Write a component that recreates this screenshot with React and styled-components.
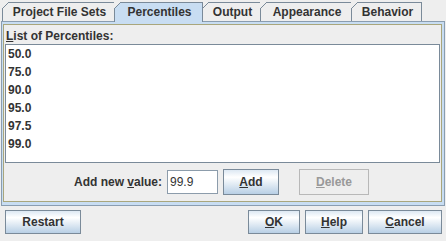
import React from "react";
import styled, { createGlobalStyle, css } from "styled-components";

const Global = createGlobalStyle`
  html, body { margin: 0; padding: 0; background: #eeeeee; }
`;

const BORDER = "#7a8a99";
const SEL = "#c8ddf2";
const BG = "#eeeeee";

const Root = styled.div`
  width: 446px;
  height: 241px;
  box-sizing: border-box;
  background: ${BG};
  display: flex;
  flex-direction: column;
  font-family: "Liberation Sans", Arial, sans-serif;
  font-size: 12px;
  font-weight: bold;
  color: #333333;
`;

const TabBar = styled.div`
  display: flex;
  align-items: flex-end;
  height: 21px;
  box-sizing: border-box;
  padding: 2px 0 0 2px;
  position: relative;
  z-index: 1;
`;

const Tab = styled.div`
  position: relative;
  box-sizing: border-box;
  width: ${(p) => p.$w}px;
  height: 19px;
  margin-left: ${(p) => (p.$first ? 0 : -1)}px;
  border: 1px solid ${BORDER};
  border-bottom: none;
  background: ${BG};
  display: flex;
  align-items: center;
  justify-content: center;
  padding-left: 2px;
  white-space: nowrap;
  ${(p) =>
    p.$selected &&
    css`
      background: ${SEL};
      height: 20px;
      margin-bottom: -1px;
      padding-bottom: 1px;
      z-index: 2;
    `}
  &::before {
    content: "";
    position: absolute;
    top: -1px;
    left: -1px;
    width: 7px;
    height: 7px;
    background: linear-gradient(
      135deg,
      ${BG} 0,
      ${BG} calc(50% - 0.6px),
      ${BORDER} calc(50% - 0.6px),
      ${BORDER} calc(50% + 0.6px),
      transparent calc(50% + 0.6px)
    );
  }
`;

const Panel = styled.div`
  margin: 0 1px;
  height: 185px;
  box-sizing: border-box;
  border: 1px solid #8a9db0;
  background: ${SEL};
  padding: 2px 2px 3px 1px;
  display: flex;
`;

const Content = styled.div`
  flex: 1;
  border: 1px solid #a9a67c;
  background: ${BG};
  padding: 3px 1px 0 1px;
  display: flex;
  flex-direction: column;
`;

const Caption = styled.div`
  height: 16px;
  line-height: 16px;
  padding-left: 1px;
`;

const List = styled.div`
  height: 119px;
  box-sizing: border-box;
  border: 1px solid ${BORDER};
  background: #ffffff;
  display: flex;
  flex-direction: column;
`;

const Item = styled.div`
  height: 18px;
  line-height: 18px;
  padding-left: 2px;
`;

const AddRow = styled.div`
  margin-top: 6px;
  height: 26px;
  display: flex;
  align-items: center;
  justify-content: center;
  padding-right: 2px;
`;

const FieldLabel = styled.span`
  margin-right: 5px;
`;

const Field = styled.div`
  width: 51px;
  height: 24px;
  box-sizing: border-box;
  border: 1px solid #8c9cab;
  background: #ffffff;
  font-weight: normal;
  display: flex;
  align-items: center;
  padding-left: 2px;
  margin-right: 5px;
`;

const Button = styled.div`
  box-sizing: border-box;
  width: ${(p) => p.$w}px;
  height: ${(p) => p.$h || 24}px;
  margin-left: ${(p) => p.$ml || 0}px;
  border: 1px solid ${BORDER};
  background: linear-gradient(#dde8f3 0%, #ffffff 30%, #b8cfe5 100%);
  display: flex;
  align-items: center;
  justify-content: center;
  ${(p) =>
    p.$disabled &&
    css`
      border-color: #b8b8b8;
      background: ${BG};
      color: #999999;
    `}
`;

const Mn = styled.span`
  text-decoration: underline;
  text-underline-offset: 1px;
`;

const ButtonBar = styled.div`
  display: flex;
  justify-content: space-between;
  padding: 4px 4px 0 5px;
`;

const Group = styled.div`
  display: flex;
`;

const tabs = [
  ["Project File Sets", 113],
  ["Percentiles", 89],
  ["Output", 59],
  ["Appearance", 92],
  ["Behavior", 71],
];

const values = ["50.0", "75.0", "90.0", "95.0", "97.5", "99.0"];

export default function App() {
  return (
    <Root>
      <Global />
      <TabBar>
        {tabs.map(([t, w], i) => (
          <Tab key={t} $w={w} $first={i === 0} $selected={i === 1}>
            {t}
          </Tab>
        ))}
      </TabBar>
      <Panel>
        <Content>
          <Caption>
            <Mn>L</Mn>ist of Percentiles:
          </Caption>
          <List>
            {values.map((v) => (
              <Item key={v}>{v}</Item>
            ))}
          </List>
          <AddRow>
            <FieldLabel>
              Add new <Mn>v</Mn>alue:
            </FieldLabel>
            <Field>99.9</Field>
            <Button $w={56} $h={26}>
              <Mn>A</Mn>dd
            </Button>
            <Button $w={70} $h={26} $ml={20} $disabled>
              <Mn>D</Mn>elete
            </Button>
          </AddRow>
        </Content>
      </Panel>
      <ButtonBar>
        <Button $w={76}>Restart</Button>
        <Group>
          <Button $w={52}>
            <Mn>O</Mn>K
          </Button>
          <Button $w={58} $ml={5}>
            <Mn>H</Mn>elp
          </Button>
          <Button $w={74} $ml={5}>
            <Mn>C</Mn>ancel
          </Button>
        </Group>
      </ButtonBar>
    </Root>
  );
}
